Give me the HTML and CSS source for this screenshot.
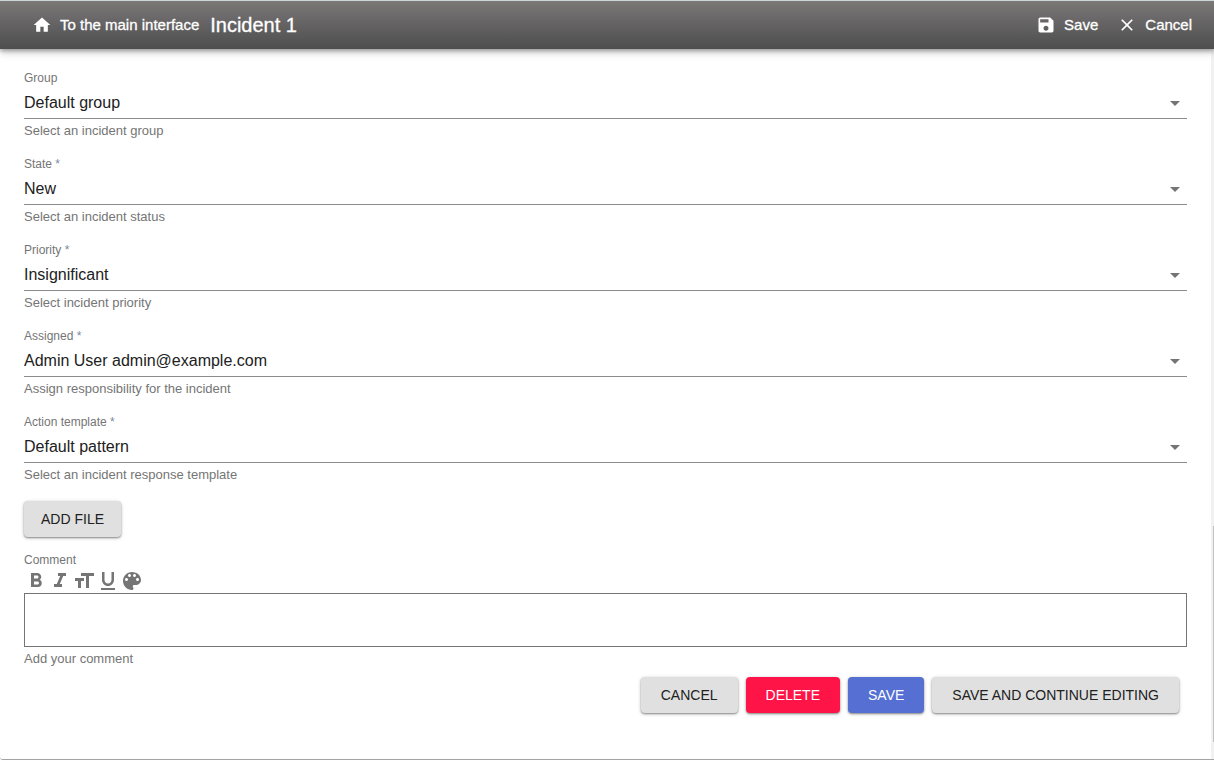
FILE: index.html
```html
<!DOCTYPE html>
<html lang="en">
<head>
<meta charset="utf-8">
<title>Incident 1</title>
<link rel="stylesheet" href="styles.css">
</head>
<body>
<div class="page">
  <header class="topbar">
    <a class="bar-action" href="#"><svg class="bar-icon" viewBox="0 0 24 24"><path d="M10 20v-6h4v6h5v-8h3L12 3 2 12h3v8z"/></svg>To the main interface</a>
    <h1 class="title">Incident 1</h1>
    <button class="bar-action push" type="button"><svg class="bar-icon" viewBox="0 0 24 24"><path d="M17 3H5c-1.110 0-2 .9-2 2v14c0 1.100.890 2 2 2h14c1.100 0 2-.9 2-2V7l-4-4zm-5 16c-1.660 0-3-1.340-3-3s1.340-3 3-3 3 1.340 3 3-1.340 3-3 3zm3-10H5V5h10v4z"/></svg>Save</button>
    <button class="bar-action" type="button"><svg class="bar-icon" viewBox="0 0 24 24"><path d="M19 6.410 17.590 5 12 10.590 6.410 5 5 6.410 10.590 12 5 17.590 6.410 19 12 13.410 17.590 19 19 17.590 13.410 12z"/></svg>Cancel</button>
  </header>
  <div class="body">
    <form class="form">
      <div class="fields">
        <div class="field">
          <label class="label" for="group">Group</label>
          <div class="select-box"><select class="select" id="group"><option>Default group</option></select><svg class="arrow" viewBox="0 0 24 24"><path d="M7 10l5 5 5-5z"/></svg></div>
          <p class="helper">Select an incident group</p>
        </div>
        <div class="field">
          <label class="label" for="state">State<span class="star"> *</span></label>
          <div class="select-box"><select class="select" id="state"><option>New</option></select><svg class="arrow" viewBox="0 0 24 24"><path d="M7 10l5 5 5-5z"/></svg></div>
          <p class="helper">Select an incident status</p>
        </div>
        <div class="field">
          <label class="label" for="priority">Priority<span class="star"> *</span></label>
          <div class="select-box"><select class="select" id="priority"><option>Insignificant</option></select><svg class="arrow" viewBox="0 0 24 24"><path d="M7 10l5 5 5-5z"/></svg></div>
          <p class="helper">Select incident priority</p>
        </div>
        <div class="field">
          <label class="label" for="assigned">Assigned<span class="star"> *</span></label>
          <div class="select-box"><select class="select" id="assigned"><option>Admin User admin@example.com</option></select><svg class="arrow" viewBox="0 0 24 24"><path d="M7 10l5 5 5-5z"/></svg></div>
          <p class="helper">Assign responsibility for the incident</p>
        </div>
        <div class="field">
          <label class="label" for="template">Action template<span class="star"> *</span></label>
          <div class="select-box"><select class="select" id="template"><option>Default pattern</option></select><svg class="arrow" viewBox="0 0 24 24"><path d="M7 10l5 5 5-5z"/></svg></div>
          <p class="helper">Select an incident response template</p>
        </div>
      </div>
      <button class="btn add-file" type="button">ADD FILE</button>
      <div class="comment">
        <label class="label" for="comment">Comment</label>
        <div class="tools">
          <button class="tool" type="button" aria-label="Bold"><svg viewBox="0 0 24 24"><path d="M15.600 10.790c.970-.670 1.650-1.770 1.650-2.790 0-2.260-1.750-4-4-4H7v14h7.040c2.090 0 3.710-1.700 3.710-3.790 0-1.520-.860-2.820-2.150-3.420zM10 6.500h3c.830 0 1.500.670 1.500 1.500s-.670 1.500-1.500 1.500h-3v-3zm3.500 9H10v-3h3.500c.830 0 1.500.670 1.500 1.500s-.670 1.500-1.500 1.500z"/></svg></button>
          <button class="tool" type="button" aria-label="Italic"><svg viewBox="0 0 24 24"><path d="M10 4v3h2.210l-3.420 8H6v3h8v-3h-2.210l3.420-8H18V4z"/></svg></button>
          <button class="tool" type="button" aria-label="Text size"><svg viewBox="0 0 24 24"><path d="M9 4v3h5v12h3V7h5V4H9zm-6 8h3v7h3v-7h3V9H3v3z"/></svg></button>
          <button class="tool" type="button" aria-label="Underline"><svg viewBox="0 0 24 24"><path d="M12 17c3.310 0 6-2.690 6-6V3h-2.500v8c0 1.930-1.570 3.500-3.500 3.500S8.500 12.930 8.500 11V3H6v8c0 3.310 2.690 6 6 6zm-7 2v2h14v-2H5z"/></svg></button>
          <button class="tool" type="button" aria-label="Text color"><svg viewBox="0 0 24 24"><path d="M12 3c-4.970 0-9 4.030-9 9s4.030 9 9 9c.830 0 1.500-.670 1.500-1.500 0-.390-.150-.740-.390-1.010-.230-.260-.380-.610-.380-.990 0-.830.670-1.500 1.500-1.500H16c2.760 0 5-2.240 5-5 0-4.420-4.030-8-9-8zm-5.500 9c-.830 0-1.500-.670-1.500-1.500S5.670 9 6.500 9 8 9.670 8 10.500 7.330 12 6.500 12zm3-4C8.670 8 8 7.330 8 6.500S8.670 5 9.500 5s1.500.670 1.500 1.500S10.330 8 9.500 8zm5 0c-.830 0-1.500-.670-1.500-1.500S13.670 5 14.500 5s1.500.670 1.500 1.500S15.330 8 14.500 8zm3 4c-.830 0-1.500-.670-1.500-1.500S16.670 9 17.500 9s1.500.670 1.500 1.500-.670 1.500-1.500 1.500z"/></svg></button>
        </div>
        <textarea class="editor" id="comment"></textarea>
        <p class="helper">Add your comment</p>
      </div>
      <div class="actions">
        <button class="btn wide" type="button">CANCEL</button>
        <button class="btn wide danger" type="button">DELETE</button>
        <button class="btn wide primary" type="button">SAVE</button>
        <button class="btn wide" type="button">SAVE AND CONTINUE EDITING</button>
      </div>
    </form>
    <div class="track"><div class="thumb"></div></div>
  </div>
</div>
</body>
</html>
```
FILE: styles.css
```css
* {
  box-sizing: border-box;
}

body {
  margin: 0;
  background: #fff;
  color: #212121;
  font-family: "Liberation Sans", Arial, sans-serif;
}

button,
select,
textarea {
  font-family: inherit;
}

.page {
  display: flex;
  flex-direction: column;
  min-height: 100vh;
  border-bottom: 1px solid #a3a3a3;
  border-bottom-left-radius: 3px;
}

.topbar {
  position: relative;
  display: flex;
  align-items: center;
  height: 49px;
  padding: 0 22px 0 32px;
  border-top: 1px solid #ccd5d8;
  background: linear-gradient(#7b7976, #686667 40%, #4e4e4e);
  box-shadow: 0 2px 4px rgba(0, 0, 0, 0.3), 0 4px 8px rgba(0, 0, 0, 0.16);
  color: #fff;
}

.bar-action {
  display: flex;
  align-items: center;
  gap: 8px;
  padding: 0;
  border: 0;
  background: none;
  color: #fff;
  font-size: 15px;
  line-height: 20px;
  text-decoration: none;
  -webkit-text-stroke: 0.3px #fff;
}

.bar-action + .bar-action {
  margin-left: 19px;
}

.push {
  margin-left: auto;
}

.bar-icon {
  width: 20px;
  height: 20px;
  fill: #fff;
}

.title {
  margin: 0 0 0 11px;
  font-size: 20px;
  line-height: 24px;
  font-weight: 400;
  -webkit-text-stroke: 0.3px #fff;
}

.body {
  display: flex;
  flex: 1;
}

.form {
  flex: 1;
  padding: 21px 24px 0;
}

.fields {
  display: grid;
  gap: 15px;
}

.label {
  display: block;
  color: #757575;
  font-size: 12px;
  line-height: 16px;
}

.star {
  color: #7c8aa0;
}

.select-box {
  display: grid;
  align-items: center;
  border-bottom: 1px solid #8c8c8c;
}

.select {
  grid-area: 1 / 1;
  width: 100%;
  height: 32px;
  padding: 0;
  border: 0;
  appearance: none;
  background: none;
  color: #212121;
  font-size: 16px;
}

.arrow {
  grid-area: 1 / 1;
  justify-self: end;
  width: 24px;
  height: 24px;
  margin-top: 2px;
  fill: #757575;
  pointer-events: none;
}

.helper {
  margin: 2px 0 0;
  color: #757575;
  font-size: 13px;
  line-height: 20px;
}

.btn {
  height: 36px;
  padding: 0 17px;
  border: 0;
  border-radius: 4px;
  background: #e0e0e0;
  box-shadow: 0 1px 2px rgba(0, 0, 0, 0.4), 0 1px 4px rgba(0, 0, 0, 0.16);
  color: #212121;
  font-size: 14px;
}

.wide {
  padding: 0 20px;
}

.danger {
  background: #ff1447;
  color: #fff;
}

.primary {
  background: #556fd3;
  color: #fff;
}

.add-file {
  margin-top: 16px;
}

.comment {
  margin-top: 15px;
}

.tools {
  display: flex;
  padding-top: 1px;
}

.tool {
  width: 24px;
  height: 24px;
  padding: 0;
  border: 0;
  background: none;
}

.tool svg {
  display: block;
  width: 24px;
  height: 24px;
  fill: #757575;
}

.editor {
  display: block;
  width: 100%;
  height: 54px;
  border: 1px solid #757575;
  resize: none;
}

.actions {
  display: flex;
  justify-content: flex-end;
  gap: 8px;
  padding: 8px 8px 16px 0;
}

.track {
  display: flex;
  flex-direction: column;
  justify-content: flex-end;
  align-items: flex-end;
  width: 3px;
  padding-bottom: 17px;
  background: #f1f1f1;
}

.thumb {
  width: 1px;
  height: 216px;
  background: #c1c1c1;
}
```
